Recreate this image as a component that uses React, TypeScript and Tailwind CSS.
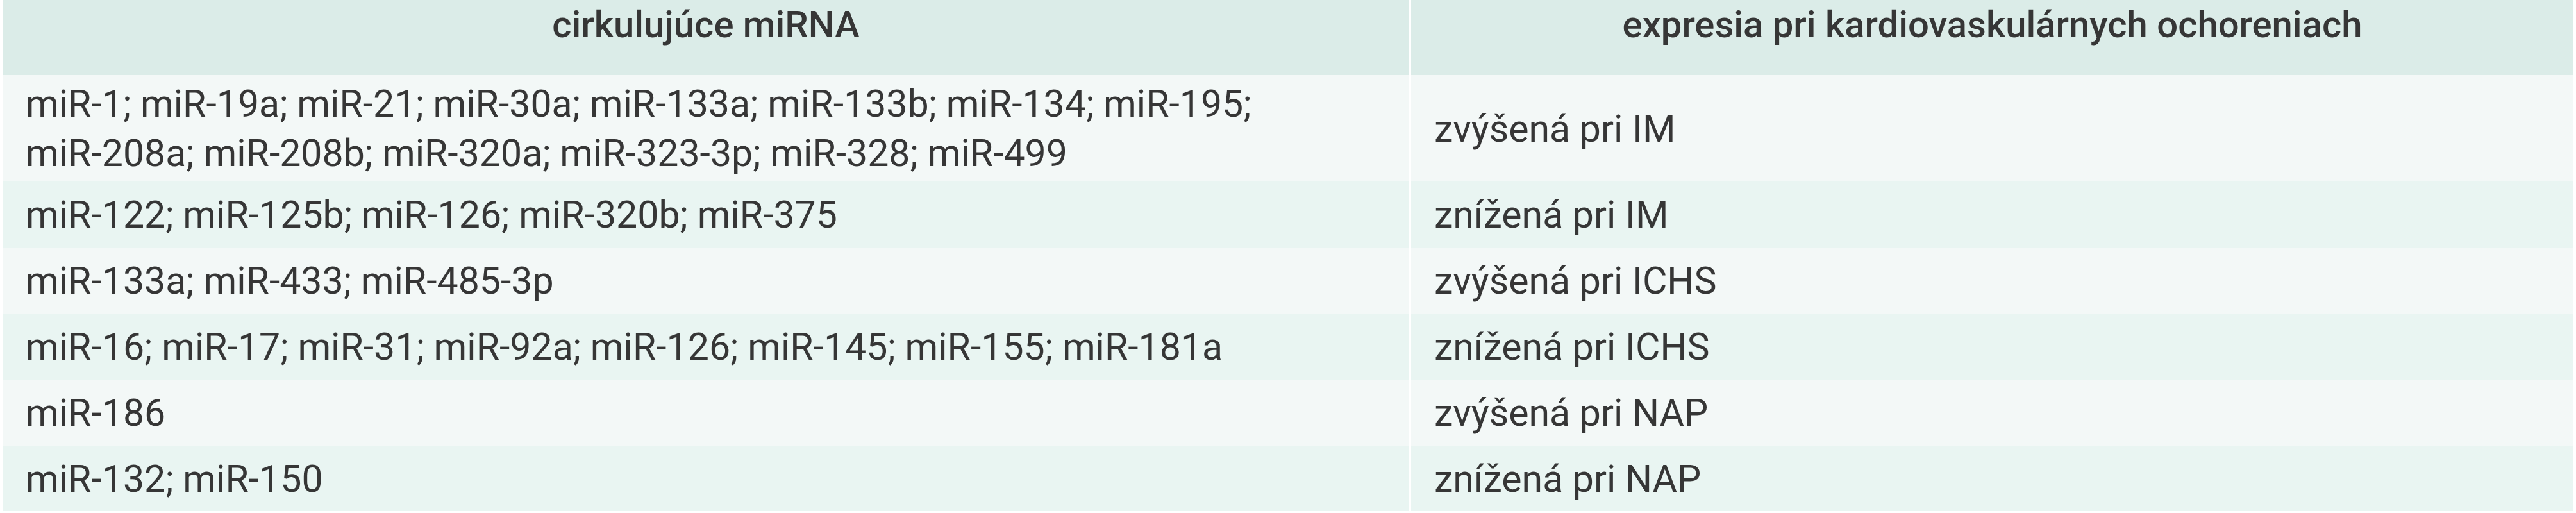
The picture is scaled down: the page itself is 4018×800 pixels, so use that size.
import React from "react";

const rows: { mirna: string[]; expr: string; h: string; bg: string }[] = [
  {
    mirna: [
      "miR-1;",
      "miR-19a;",
      "miR-21;",
      "miR-30a;",
      "miR-133a;",
      "miR-133b;",
      "miR-134;",
      "miR-195;",
      "miR-208a;",
      "miR-208b;",
      "miR-320a;",
      "miR-323-3p;",
      "miR-328;",
      "miR-499",
    ],
    expr: "zvýšená pri IM",
    h: "h-[166px]",
    bg: "bg-[#f3f8f7]",
  },
  {
    mirna: ["miR-122;", "miR-125b;", "miR-126;", "miR-320b;", "miR-375"],
    expr: "znížená pri IM",
    h: "h-[103px]",
    bg: "bg-[#e9f5f2]",
  },
  { mirna: ["miR-133a;", "miR-433;", "miR-485-3p"], expr: "zvýšená pri ICHS", h: "h-[103px]", bg: "bg-[#f3f8f7]" },
  {
    mirna: ["miR-16;", "miR-17;", "miR-31;", "miR-92a;", "miR-126;", "miR-145;", "miR-155;", "miR-181a"],
    expr: "znížená pri ICHS",
    h: "h-[103px]",
    bg: "bg-[#e9f5f2]",
  },
  { mirna: ["miR-186"], expr: "zvýšená pri NAP", h: "h-[103px]", bg: "bg-[#f3f8f7]" },
  { mirna: ["miR-132;", "miR-150"], expr: "znížená pri NAP", h: "h-[102px]", bg: "bg-[#e9f5f2]" },
];

export default function App() {
  return (
    <div className="w-[4018px] h-[800px] bg-white overflow-hidden font-['Roboto',sans-serif] text-[59px] leading-[77px] text-[#363636]">
      <div className="ml-[4px] w-[4010px] grid grid-cols-[2194px_1813px] gap-x-[3px]">
        <div className="h-[117px] bg-[#dbece8] text-center font-medium text-[58px]">cirkulujúce miRNA</div>
        <div className="h-[117px] bg-[#dbece8] text-center font-medium text-[58px]">
          expresia pri kardiovaskulárnych ochoreniach
        </div>
        {rows.map((r, i) => (
          <React.Fragment key={i}>
            <div className={`${r.h} ${r.bg} flex items-center px-[36px]`}>
              <p>
                {r.mirna.map((m, j) => (
                  <React.Fragment key={j}>
                    <span className="whitespace-nowrap">{m}</span>
                    {j < r.mirna.length - 1 ? " " : null}
                  </React.Fragment>
                ))}
              </p>
            </div>
            <div className={`${r.h} ${r.bg} flex items-center px-[36px]`}>
              <span>{r.expr}</span>
            </div>
          </React.Fragment>
        ))}
      </div>
    </div>
  );
}
